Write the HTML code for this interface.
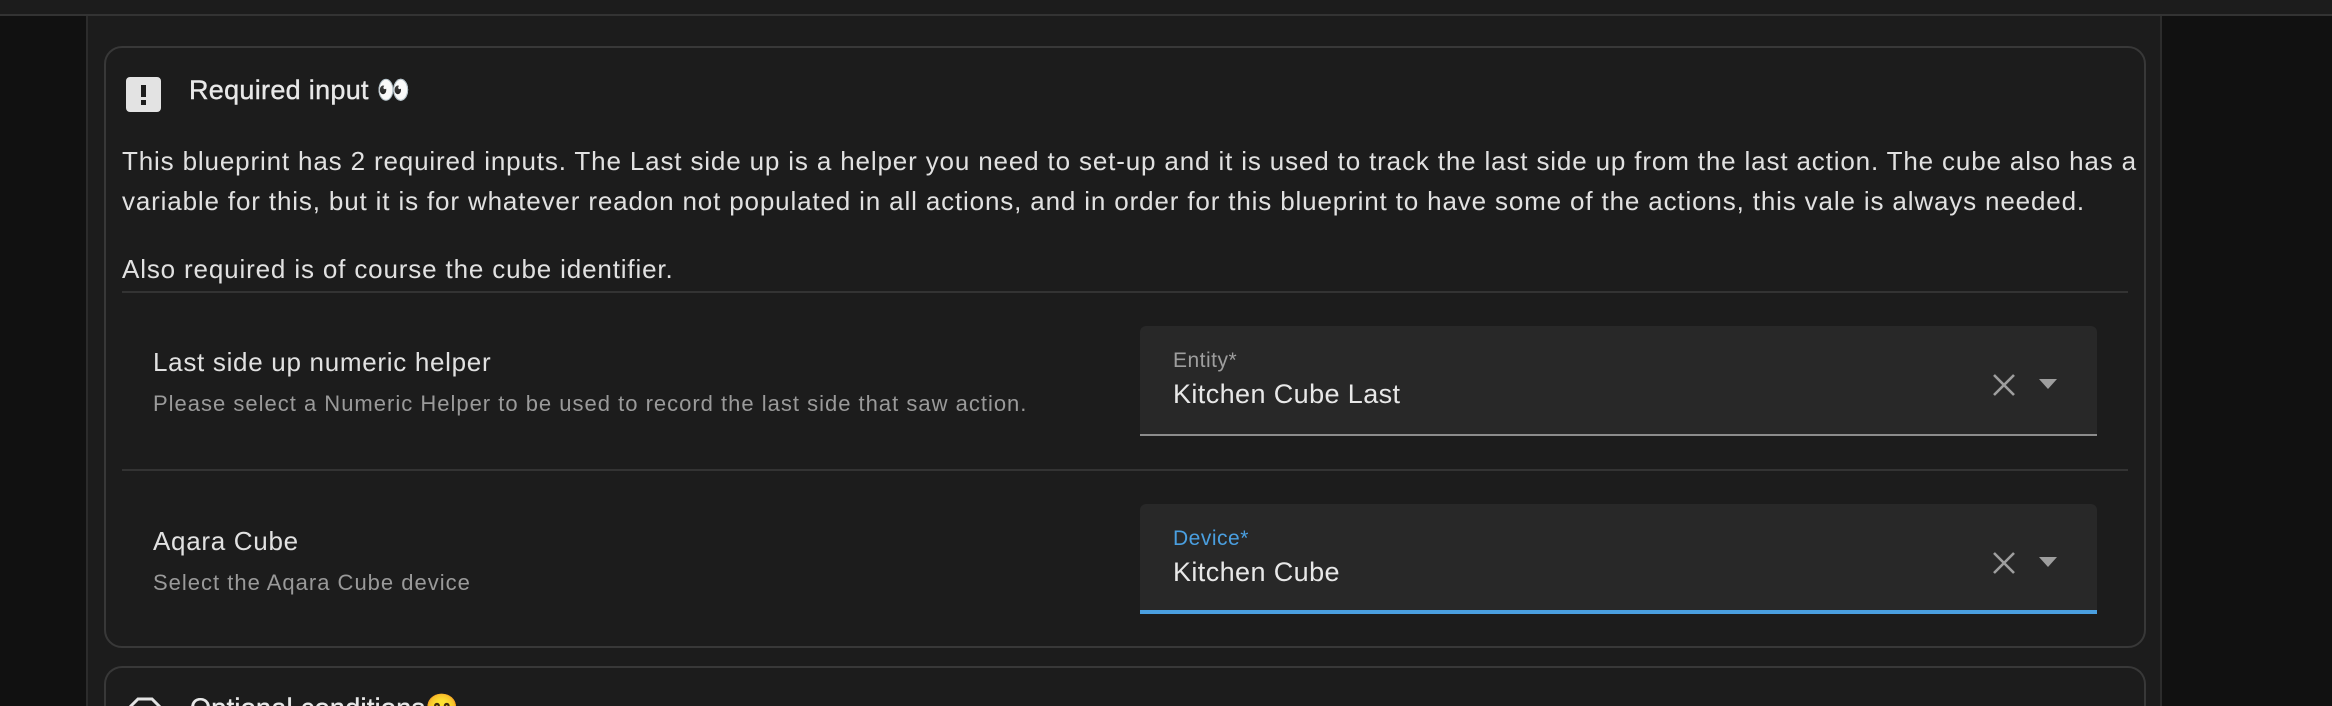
<!DOCTYPE html>
<html style="overflow:hidden;width:2332px;height:706px"><head><meta charset="utf-8"><style>
*{box-sizing:border-box;margin:0;padding:0}
body{width:2332px;height:706px;overflow:hidden;background:#111;font-family:"Liberation Sans","Noto Sans CJK JP",sans-serif;color:#e1e1e1;position:relative}
.top{position:absolute;left:0;top:0;width:2332px;height:16px;background:#1c1c1c;border-bottom:2px solid #333}
.panel{position:absolute;left:86px;top:16px;width:2076px;height:690px;background:#1c1c1c;border-left:2px solid #2c2c2c;border-right:2px solid #2c2c2c}
.card{position:absolute;left:104px;top:46px;width:2042px;height:602px;border:2px solid #383838;border-radius:18px}
.card2{position:absolute;left:104px;top:666px;width:2042px;height:40px;border:2px solid #383838;border-bottom:none;border-radius:18px 18px 0 0}
.icon{position:absolute;left:126px;top:77px;width:35px;height:35px;background:#e3e3e3;border-radius:4px}
.icon:before{content:"";position:absolute;left:15px;top:8px;width:5px;height:12px;background:#1c1c1c}
.icon:after{content:"";position:absolute;left:15px;top:23px;width:5px;height:5px;background:#1c1c1c}
.title{position:absolute;left:189px;top:74px;font-size:27px;letter-spacing:0.3px;color:#e8e8e8;-webkit-text-stroke:0.4px #e8e8e8}
.body{position:absolute;left:122px;top:141px;width:2030px;font-size:26px;line-height:40px;color:#e1e1e1;letter-spacing:0.85px}
.hr{position:absolute;left:122px;width:2006px;height:2px;background:#333}
.lbl{position:absolute;left:153px;font-size:26px;letter-spacing:0.7px;color:#e1e1e1}
.desc{position:absolute;left:153px;font-size:22px;letter-spacing:1px;color:#9a9a9a}
.field{position:absolute;left:1140px;width:957px;height:110px;background:#282828;border-radius:6px 6px 0 0}
.field .fl{position:absolute;left:33px;top:23px;font-size:21px;letter-spacing:0.5px;color:#9e9e9e}
.field .fv{position:absolute;left:33px;top:53px;font-size:27px;letter-spacing:0.4px;color:#e8e8e8}
.field .ul{position:absolute;left:0;bottom:0;width:100%;height:2px;background:#8c8c8c}
.x{position:absolute;left:851px;top:46px}
.car{position:absolute;left:899px;top:53px;width:0;height:0;border-left:9px solid transparent;border-right:9px solid transparent;border-top:10px solid #9e9e9e}
</style></head><body>
<div class="top"></div>
<div class="panel"></div>
<div class="card"></div>
<div class="icon"></div>
<div class="title">Required input 👀</div>
<div class="body">This blueprint has 2 required inputs. The Last side up is a helper you need to set-up and it is used to track the last side up from the last action. The cube also has a variable for this, but it is for whatever readon not populated in all actions, and in order for this blueprint to have some of the actions, this vale is always needed.<br><div style="height:28px"></div>Also required is of course the cube identifier.</div>
<div class="hr" style="top:291px"></div>
<div class="lbl" style="top:347px">Last side up numeric helper</div>
<div class="desc" style="top:391px">Please select a Numeric Helper to be used to record the last side that saw action.</div>
<div class="field" style="top:326px"><div class="fl">Entity*</div><div class="fv">Kitchen Cube Last</div>
<svg class="x" width="26" height="26" viewBox="0 0 26 26"><path d="M3 3L23 23M23 3L3 23" stroke="#9e9e9e" stroke-width="2.6"/></svg><div class="car"></div><div class="ul"></div></div>
<div class="hr" style="top:469px"></div>
<div class="lbl" style="top:526px">Aqara Cube</div>
<div class="desc" style="top:570px">Select the Aqara Cube device</div>
<div class="field" style="top:504px"><div class="fl" style="color:#4a9fe0">Device*</div><div class="fv">Kitchen Cube</div>
<svg class="x" width="26" height="26" viewBox="0 0 26 26"><path d="M3 3L23 23M23 3L3 23" stroke="#9e9e9e" stroke-width="2.6"/></svg><div class="car"></div><div class="ul" style="height:4px;background:#4a9fe0"></div></div>
<div class="card2"></div>
<svg style="position:absolute;left:128px;top:697px" width="34" height="34" viewBox="0 0 34 34"><path d="M10 2H24L32 10V24L24 32H10L2 24V10Z" fill="none" stroke="#e3e3e3" stroke-width="3"/></svg>
<div class="title" style="top:692px;left:190px">Optional conditions😊</div>
</body></html>
